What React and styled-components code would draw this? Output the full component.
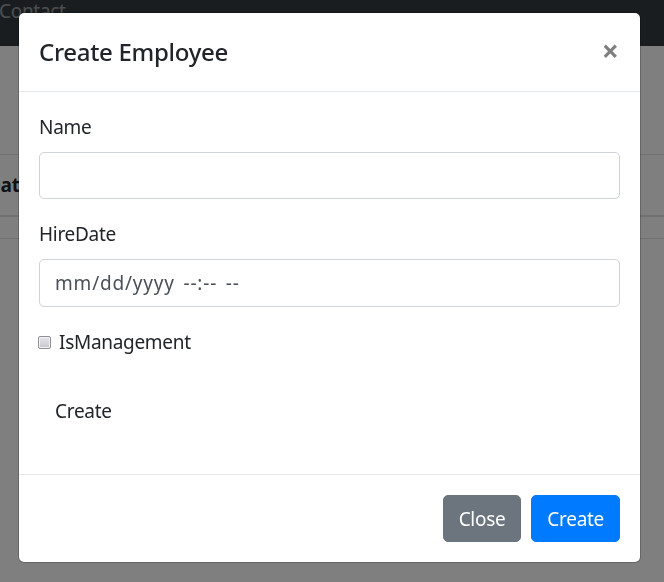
import * as React from "react"
import styled, { createGlobalStyle } from "styled-components"

const GlobalStyle = createGlobalStyle`
  html, body {
    margin: 0;
    padding: 0;
  }
  body {
    width: 664px;
    height: 582px;
    overflow: hidden;
    background: #fff;
    color: #212529;
    font-family: "Noto Sans", "Open Sans", sans-serif;
    font-size: 19px;
    line-height: 30px;
    letter-spacing: -0.3px;
  }
  *, *::before, *::after {
    box-sizing: border-box;
  }
`

// page behind the modal

const Page = styled.div`
  width: 664px;
  height: 582px;
  overflow: hidden;
`

const Navbar = styled.nav`
  display: flex;
  align-items: flex-start;
  height: 46px;
  background: #343a40;
`

const NavLink = styled.a`
  display: block;
  margin: -4px 0 0 -1px;
  color: rgba(255, 255, 255, 0.5);
  line-height: 30px;
  text-decoration: none;
`

const Content = styled.main`
  padding-top: 108px;
`

const BgTable = styled.table`
  width: 100%;
  border-collapse: collapse;
`

const BgHead = styled.th`
  padding: 15px 0;
  text-align: left;
  font-weight: 700;
  line-height: 30px;
  border-top: 1px solid #dee2e6;
  border-bottom: 2px solid #dee2e6;
  text-indent: -13px;
`

const BgCell = styled.td`
  height: 22px;
  padding: 0;
  border-bottom: 1px solid #dee2e6;
`

// modal

const Backdrop = styled.div`
  position: fixed;
  inset: 0;
  background: rgba(0, 0, 0, 0.5);
  padding: 12px 0 0 18px;
`

const Dialog = styled.div`
  width: 623px;
  background: #fff;
  border: 1px solid rgba(0, 0, 0, 0.2);
  border-radius: 6px;
  background-clip: padding-box;
`

const Header = styled.div`
  display: flex;
  align-items: flex-start;
  justify-content: space-between;
  padding: 20px;
  border-bottom: 1px solid #e5e9ec;
`

const Title = styled.h5`
  margin: 0;
  font-size: 24px;
  font-weight: 500;
  line-height: 37.5px;
`

const CloseX = styled.button`
  margin: -20px -20px -20px auto;
  padding: 23px 21px 17px 20px;
  background: transparent;
  border: 0;
  font-family: inherit;
  font-size: 30px;
  font-weight: 700;
  line-height: 1;
  color: #000;
  opacity: 0.5;
  cursor: pointer;
`

const Body = styled.div`
  padding: 20px;
`

const FormGroup = styled.div`
  margin-bottom: 20px;
`

const Label = styled.label`
  display: inline-flex;
  align-items: center;
  gap: 8px;
  margin-bottom: 10px;
`

const Input = styled.input`
  display: block;
  width: 100%;
  height: 47.5px;
  padding: 7.5px 15px;
  font-family: inherit;
  font-size: 19px;
  line-height: 30px;
  letter-spacing: -0.3px;
  color: #495057;
  background: #fff;
  border: 1px solid #ced4da;
  border-radius: 5px;
  outline: none;

  &::placeholder {
    color: #495057;
    opacity: 1;
    letter-spacing: 0.8px;
    word-spacing: 3px;
  }
`

const Check = styled.input`
  appearance: none;
  width: 13px;
  height: 13px;
  margin: 0 0 0 -1px;
  border: 1px solid #8f9096;
  border-radius: 2px;
  background: linear-gradient(#e6e6e9, #c6c7cd);
  box-shadow: inset 0 0 0 1px #f2f2f4;
`

const Button = styled.button`
  display: inline-block;
  padding: 7.5px 15px;
  font-family: inherit;
  font-size: 19px;
  line-height: 30px;
  letter-spacing: -0.3px;
  border: 1px solid ${(p) => p.$bg || "transparent"};
  border-radius: 5px;
  background: ${(p) => p.$bg || "transparent"};
  color: ${(p) => (p.$bg ? "#fff" : "#212529")};
  cursor: pointer;
`

const Footer = styled.div`
  display: flex;
  align-items: center;
  justify-content: flex-end;
  padding: 15px;
  border-top: 1px solid #e5e9ec;

  > * {
    margin: 5px;
  }
`

export default function App() {
  return (
    <>
      <GlobalStyle />
      <Page>
        <Navbar>
          <NavLink href="#">Contact</NavLink>
        </Navbar>
        <Content>
          <BgTable>
            <thead>
              <tr>
                <BgHead>Date</BgHead>
              </tr>
            </thead>
            <tbody>
              <tr>
                <BgCell />
              </tr>
            </tbody>
          </BgTable>
        </Content>
      </Page>

      <Backdrop>
        <Dialog role="dialog">
          <Header>
            <Title>Create Employee</Title>
            <CloseX aria-label="Close">×</CloseX>
          </Header>
          <form onSubmit={(e) => e.preventDefault()}>
            <Body>
              <FormGroup>
                <Label htmlFor="name">Name</Label>
                <Input id="name" type="text" />
              </FormGroup>
              <FormGroup>
                <Label htmlFor="hire">HireDate</Label>
                <Input id="hire" type="text" placeholder="mm/dd/yyyy --:-- --" />
              </FormGroup>
              <FormGroup>
                <Label>
                  <Check type="checkbox" />
                  IsManagement
                </Label>
              </FormGroup>
              <FormGroup>
                <Button type="submit">Create</Button>
              </FormGroup>
            </Body>
            <Footer>
              <Button type="button" $bg="#6c757d">Close</Button>
              <Button type="submit" $bg="#007bff">Create</Button>
            </Footer>
          </form>
        </Dialog>
      </Backdrop>
    </>
  )
}
